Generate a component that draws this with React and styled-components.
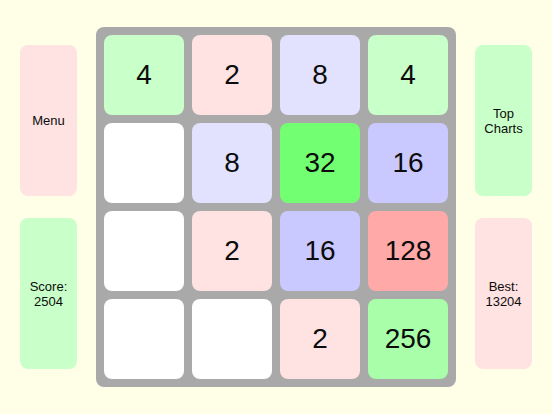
import React from "react";
import styled, { createGlobalStyle } from "styled-components";

const GlobalStyle = createGlobalStyle`
  * {
    box-sizing: border-box;
  }

  body {
    margin: 0;
    background: #ffffe8;
    color: #0c0c0c;
    font-family: "Liberation Sans", Arial, Helvetica, sans-serif;
  }
`;

const tileColors = {
  0: "#ffffff",
  2: "#ffe2e2",
  4: "#c9ffc9",
  8: "#e2e2ff",
  16: "#c9c9ff",
  32: "#72ff72",
  128: "#ffa9a9",
  256: "#a9ffa9",
};

const cells = [
  [4, 2, 8, 4],
  [0, 8, 32, 16],
  [0, 2, 16, 128],
  [0, 0, 2, 256],
];

const Wrapper = styled.main`
  min-height: 100vh;
  padding: 20px;
  display: grid;
  grid-template-columns: 57px minmax(0, 360px) 57px;
  column-gap: 19px;
  justify-content: center;
  align-content: center;
  align-items: center;
`;

const Side = styled.aside`
  display: flex;
  flex-direction: column;
  gap: 22px;
`;

const Panel = styled.div`
  height: 151px;
  padding: 0;
  border: none;
  border-radius: 8px;
  display: flex;
  flex-direction: column;
  align-items: center;
  justify-content: center;
  text-align: center;
  font-family: inherit;
  font-size: 13px;
  line-height: 15px;
  color: inherit;
  background: ${({ $tone }) => ($tone === "green" ? "#c9ffc9" : "#ffe2e2")};
`;

const PanelButton = styled(Panel).attrs({ as: "button", type: "button" })`
  cursor: pointer;
`;

const Board = styled.section`
  padding: 8px;
  display: grid;
  grid-template-columns: repeat(4, minmax(0, 1fr));
  gap: 8px;
  border-radius: 8px;
  background: #a9a9a9;
`;

const Tile = styled.div`
  aspect-ratio: 1;
  display: flex;
  align-items: center;
  justify-content: center;
  border-radius: 8px;
  font-size: 28px;
  line-height: 32px;
  background: ${({ $value }) => tileColors[$value]};
`;

const App = () => {
  return (
    <>
      <GlobalStyle />
      <Wrapper>
        <Side>
          <PanelButton $tone="pink">Menu</PanelButton>
          <Panel $tone="green">
            <span>Score:</span>
            <span>2504</span>
          </Panel>
        </Side>
        <Board aria-label="Game board">
          {cells.flat().map((value, index) => (
            <Tile key={index} $value={value}>
              {value || ""}
            </Tile>
          ))}
        </Board>
        <Side>
          <PanelButton $tone="green">
            <span>Top</span>
            <span>Charts</span>
          </PanelButton>
          <Panel $tone="pink">
            <span>Best:</span>
            <span>13204</span>
          </Panel>
        </Side>
      </Wrapper>
    </>
  );
};

export default App;
